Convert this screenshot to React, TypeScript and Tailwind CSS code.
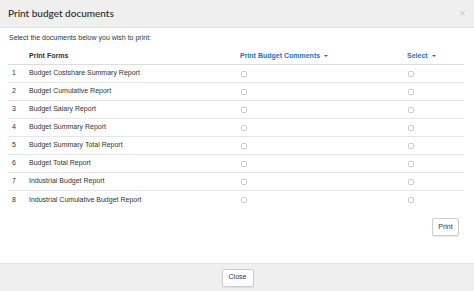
import { X } from "lucide-react";

const forms = [
  "Budget Costshare Summary Report",
  "Budget Cumulative Report",
  "Budget Salary Report",
  "Budget Summary Report",
  "Budget Summary Total Report",
  "Budget Total Report",
  "Industrial Budget Report",
  "Industrial Cumulative Budget Report",
];

function Box() {
  return <span className="block h-[6px] w-[6px] rounded-[1.5px] border border-[#c8c8c8] bg-white" />;
}

function Caret() {
  return <span className="ml-[4px] inline-block h-0 w-0 border-x-[2px] border-t-[2.5px] border-x-transparent border-t-[#1a73c9] align-middle" />;
}

function App() {
  return (
    <div className="flex h-[291px] w-[474px] flex-col bg-white font-['Liberation_Sans',Arial,sans-serif] text-[#333]">
      <div className="flex h-[28px] shrink-0 items-center justify-between border-b border-[#e2e2e2] bg-[#efefef] pl-[8px] pr-[8px]">
        <h1 className="font-['Lato',sans-serif] text-[10px] font-medium text-[#2a2a2a]">Print budget documents</h1>
        <X className="h-[7px] w-[7px] text-[#aaa]" strokeWidth={2.5} />
      </div>

      <div className="flex-1 px-[8px]">
        <p className="mt-[5px] pl-[1px] text-[7px] leading-[10px]">Select the documents below you wish to print:</p>

        <div className="mt-[6px] w-[456px]">
          <div className="grid h-[16px] grid-cols-[21px_211px_167px_1fr] items-center border-b border-[#ddd] text-[7px] font-bold">
            <span />
            <span>Print Forms</span>
            <span className="text-[#1a73c9]">
              Print Budget Comments
              <Caret />
            </span>
            <span className="text-[#1a73c9]">
              Select
              <Caret />
            </span>
          </div>
          {forms.map((f, i) => (
            <div
              key={f}
              className={`grid h-[18px] grid-cols-[21px_211px_167px_1fr] items-center text-[7px] ${i < forms.length - 1 ? "border-b border-[#e6e6e6]" : ""}`}
            >
              <span className="pl-[4px]">{i + 1}</span>
              <span>{f}</span>
              <span className="pl-[1px]">
                <Box />
              </span>
              <span className="pl-[1px]">
                <Box />
              </span>
            </div>
          ))}
        </div>

        <div className="mt-[9px] flex w-[456px] justify-end pr-[5px]">
          <button className="h-[18px] w-[27px] rounded-[2px] border border-[#ccc] bg-white text-[7px] shadow-[0_1px_1px_rgba(0,0,0,0.08)]">Print</button>
        </div>
      </div>

      <div className="flex h-[28px] shrink-0 items-center justify-center border-t border-[#e2e2e2] bg-[#efefef]">
        <button className="ml-[1px] h-[18px] w-[32px] rounded-[2px] border border-[#ccc] bg-white text-[7px] shadow-[0_1px_1px_rgba(0,0,0,0.08)]">Close</button>
      </div>
    </div>
  );
}

export default App;
